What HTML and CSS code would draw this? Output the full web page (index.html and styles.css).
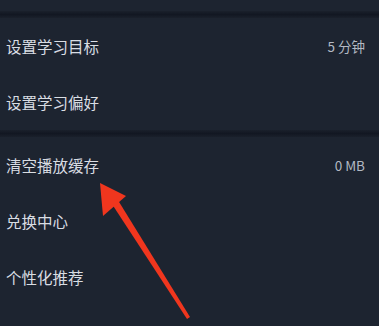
FILE: index.html
```html
<!DOCTYPE html>
<html lang="zh">
<head>
<meta charset="utf-8">
<link rel="stylesheet" href="styles.css">
</head>
<body>
<div class="page">
  <div class="top-space"></div>
  <div class="divider"></div>
  <div class="group">
    <div class="row"><span class="label">设置学习目标</span><span class="value">5 分钟</span></div>
    <div class="row"><span class="label">设置学习偏好</span></div>
  </div>
  <div class="divider"></div>
  <div class="group">
    <div class="row"><span class="label">清空播放缓存</span><span class="value">0 MB</span></div>
    <div class="row"><span class="label">兑换中心</span></div>
    <div class="row"><span class="label">个性化推荐</span></div>
  </div>
  <svg class="arrow" width="379" height="326" viewBox="0 0 379 326">
    <polygon points="110,201 116,197 190,317 187,319" fill="#f0361e"/>
    <polygon points="100,183 126,196 103,216" fill="#f0361e"/>
  </svg>
</div>
</body>
</html>
```
FILE: styles.css
```css
html, body {
  margin: 0;
  padding: 0;
  background: #1d2430;
}
.page {
  position: relative;
  width: 379px;
  height: 326px;
  overflow: hidden;
  font-family: "Noto Sans CJK SC", "Noto Sans", sans-serif;
}
.top-space {
  height: 11px;
}
.divider {
  height: 7px;
  background: linear-gradient(#1a202b, #121722 50%, #1a202b);
}
.row {
  height: 56px;
  display: flex;
  align-items: center;
  justify-content: space-between;
  padding: 0 14px 0 6px;
}
.label {
  font-size: 15.5px;
  color: #d9dde3;
}
.value {
  font-size: 13.5px;
  color: #b3b9c3;
}
.arrow {
  position: absolute;
  left: 0;
  top: 0;
}
```
